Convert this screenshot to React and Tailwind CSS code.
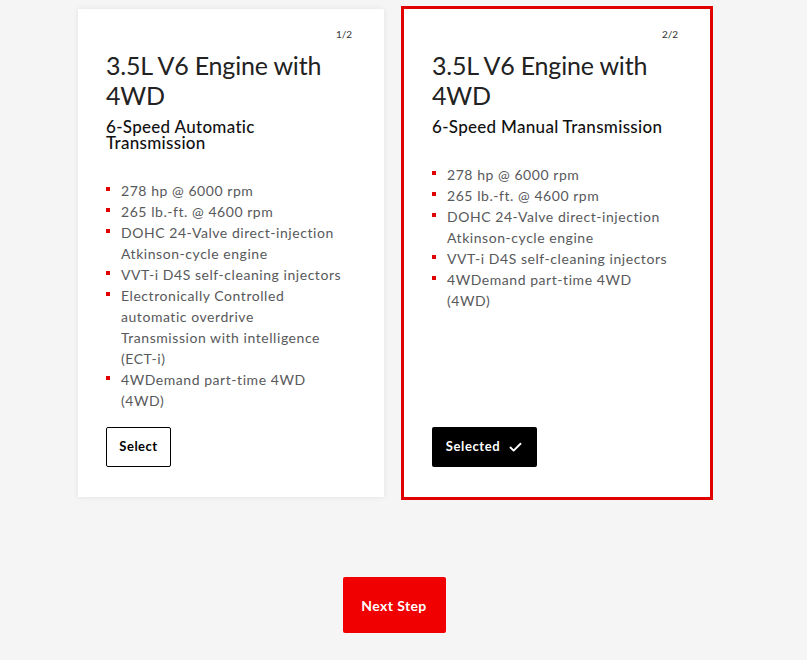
import { Check } from "lucide-react";

const cards = [
  {
    index: "1/2",
    title: "3.5L V6 Engine with 4WD",
    transmission: "6-Speed Automatic Transmission",
    specs: [
      "278 hp @ 6000 rpm",
      "265 lb.-ft. @ 4600 rpm",
      "DOHC 24-Valve direct-injection Atkinson-cycle engine",
      "VVT-i D4S self-cleaning injectors",
      "Electronically Controlled automatic overdrive Transmission with intelligence (ECT-i)",
      "4WDemand part-time 4WD (4WD)",
    ],
    selected: false,
  },
  {
    index: "2/2",
    title: "3.5L V6 Engine with 4WD",
    transmission: "6-Speed Manual Transmission",
    specs: [
      "278 hp @ 6000 rpm",
      "265 lb.-ft. @ 4600 rpm",
      "DOHC 24-Valve direct-injection Atkinson-cycle engine",
      "VVT-i D4S self-cleaning injectors",
      "4WDemand part-time 4WD (4WD)",
    ],
    selected: true,
  },
];

export default function App() {
  return (
    <div className="min-h-[660px] bg-[#f5f5f5] font-['Lato',sans-serif] text-[#222]">
      <div className="w-[710px] pl-[78px] pt-[9px]">
        <div className="flex gap-[20px]">
          {cards.map((c) => (
            <EngineCard key={c.index} card={c} />
          ))}
        </div>

        <div className="mt-[80px] flex justify-center">
          <button className="h-[56px] w-[103px] rounded-[2px] bg-[#f00000] text-[14px] font-bold tracking-[0.4px] text-white">
            Next Step
          </button>
        </div>
      </div>
    </div>
  );
}

function EngineCard({ card }) {
  return (
    <div
      className={
        "flex h-[488px] w-[306px] flex-col bg-white px-[28px] pb-[30px] pt-[19px] " +
        (card.selected ? "outline-[3px] outline-solid outline-[#e00000]" : "shadow-[0_0_6px_rgba(0,0,0,0.08)]")
      }
    >
      <div className="pr-[4px] text-right text-[10px] leading-[12px] text-[#333]">{card.index}</div>
      <h2 className="mt-[10px] text-[25px] leading-[30px] font-normal tracking-[-0.2px] text-[#222]">{card.title}</h2>
      <div className="mt-[9px] text-[17px] leading-[16px] font-medium tracking-[0.3px] text-[#111]">
        {card.transmission}
      </div>

      <ul className="mt-[29px] flex flex-col pr-[14px]">
        {card.specs.map((s) => (
          <li key={s} className="flex text-[14px] leading-[21px] tracking-[0.55px] text-[#58595b]">
            <span className="mr-[11px] mt-[7px] h-[4px] w-[4px] shrink-0 bg-[#e00000]" />
            <span>{s}</span>
          </li>
        ))}
      </ul>

      <div className="mt-auto">
        {card.selected ? (
          <button className="flex h-[40px] w-[105px] items-center justify-center gap-[8px] rounded-[2px] bg-black text-[13px] font-bold tracking-[0.6px] text-white">
            Selected <Check size={15} strokeWidth={3} />
          </button>
        ) : (
          <button className="h-[40px] w-[65px] rounded-[2px] border border-black bg-white text-[13px] font-bold tracking-[0.5px] text-black">
            Select
          </button>
        )}
      </div>
    </div>
  );
}
